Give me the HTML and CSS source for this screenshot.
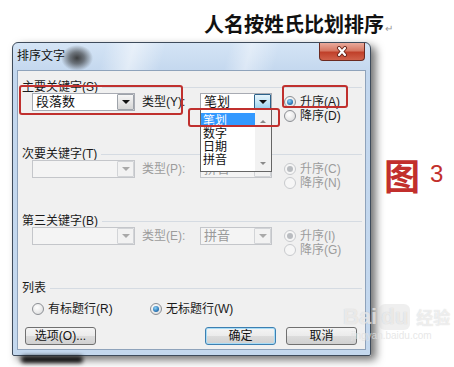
FILE: index.html
```html
<!DOCTYPE html>
<html lang="zh-CN">
<head>
<meta charset="utf-8">
<title>排序文字</title>
<link rel="stylesheet" href="styles.css">
</head>
<body>
<div class="page">
  <header class="top">
    <h1 class="headline">人名按姓氏比划排序<span class="pmark">↵</span></h1>
  </header>
  <div class="main">
    <div class="dialog">
      <div class="titlebar">
        <span class="title">排序文字</span>
        <span class="close">
          <svg width="16" height="11" viewBox="0 0 16 11"><path d="M5 2 L11 9 M11 2 L5 9" stroke="#6a2418" stroke-width="4" stroke-linecap="round"/><path d="M5 2 L11 9 M11 2 L5 9" stroke="#fff" stroke-width="2.2" stroke-linecap="round"/></svg>
        </span>
      </div>
      <div class="panel">
        <section class="sec">
          <div class="sec-head"><span>主要关键字(S)</span></div>
          <div class="sec-row">
            <div class="combo wide"><span class="combo-text">段落数</span><span class="combo-btn"><i class="tri"></i></span></div>
            <span class="type-label">类型(Y):</span>
            <div class="combo narrow"><span class="combo-text">笔划</span><span class="combo-btn pressed"><i class="tri"></i></span></div>
            <div class="radios">
              <div class="radio checked"><i class="dot"></i>升序(A)</div>
              <div class="radio"><i class="dot"></i>降序(D)</div>
            </div>
          </div>
        </section>
        <section class="sec">
          <div class="sec-head"><span>次要关键字(T)</span></div>
          <div class="sec-row">
            <div class="combo wide dis"><span class="combo-text"></span><span class="combo-btn"><i class="tri"></i></span></div>
            <span class="type-label dis-text">类型(P):</span>
            <div class="combo narrow dis"><span class="combo-text">拼音</span><span class="combo-btn"><i class="tri"></i></span></div>
            <div class="radios dis-text">
              <div class="radio checked dis"><i class="dot"></i>升序(C)</div>
              <div class="radio dis"><i class="dot"></i>降序(N)</div>
            </div>
          </div>
        </section>
        <section class="sec">
          <div class="sec-head"><span>第三关键字(B)</span></div>
          <div class="sec-row">
            <div class="combo wide dis"><span class="combo-text"></span><span class="combo-btn"><i class="tri"></i></span></div>
            <span class="type-label dis-text">类型(E):</span>
            <div class="combo narrow dis"><span class="combo-text">拼音</span><span class="combo-btn"><i class="tri"></i></span></div>
            <div class="radios dis-text">
              <div class="radio checked dis"><i class="dot"></i>升序(I)</div>
              <div class="radio dis"><i class="dot"></i>降序(G)</div>
            </div>
          </div>
        </section>
        <section class="list-sec">
          <div class="sec-head list-head"><span>列表</span></div>
          <div class="list-row">
            <div class="radio first"><i class="dot"></i>有标题行(R)</div>
            <div class="radio checked"><i class="dot"></i>无标题行(W)</div>
          </div>
        </section>
        <div class="buttons">
          <span class="btn">选项(O)...</span>
          <span class="btn default">确定</span>
          <span class="btn">取消</span>
        </div>
      </div>
    </div>
    <div class="fig"><span class="fig-char">图</span><span class="fig-num">3</span></div>
  </div>

  <div class="dropdown">
    <div class="dd-items">
      <div class="dd-item sel">笔划</div>
      <div class="dd-item">数字</div>
      <div class="dd-item">日期</div>
      <div class="dd-item">拼音</div>
    </div>
    <div class="dd-scroll"><i class="up"></i><i class="down"></i></div>
  </div>

  <div class="mark mark-a"></div>
  <div class="mark mark-b"></div>
  <div class="mark mark-c"></div>

  <div class="watermark">
    <div class="wm-logo">Bai<span class="wm-du">du</span> <span class="wm-cn">经验</span></div>
    <div class="wm-url">jingyan.baidu.com</div>
  </div>
</div>
</body>
</html>
```

FILE: styles.css
```css
* { box-sizing: border-box; margin: 0; padding: 0; }
body {
  background: #fff;
  font-family: "Noto Sans CJK SC", "Noto Sans", sans-serif;
  color: #1a1a1a;
}
.page {
  position: relative;
  width: 454px;
  height: 367px;
  overflow: hidden;
  background: #fff;
}
.top {
  height: 42px;
  padding: 12px 0 0 204px;
}
.headline {
  font-size: 20px;
  font-weight: 700;
  line-height: 24px;
  color: #111;
  white-space: nowrap;
}
.pmark {
  font-size: 10px;
  font-weight: 400;
  color: #9a9a9a;
  margin-left: 1px;
}
.main {
  display: flex;
  align-items: flex-start;
  padding-left: 12px;
}
.dialog {
  position: relative;
  width: 359px;
  height: 314px;
  border: 1px solid #3e4b5b;
  border-radius: 6px 6px 2px 2px;
  padding: 0 4px 5px;
  background: linear-gradient(180deg, #d4e4f5 0, #c3d7ee 30px, #c4d8ee 100%);
  box-shadow: 5px 4px 9px rgba(0, 0, 0, 0.55);
  font-family: "Liberation Sans", "Noto Sans CJK SC", sans-serif;
}
.dialog::after {
  content: "";
  position: absolute;
  left: 8px;
  bottom: -8px;
  width: 62px;
  height: 7px;
  background: #111;
  border-radius: 4px;
  filter: blur(2px);
}
.titlebar {
  position: relative;
  height: 27px;
  display: flex;
  justify-content: space-between;
  align-items: flex-start;
  background:
    radial-gradient(ellipse 16px 13px at 60px 15px, rgba(45, 45, 45, 0.9) 0, rgba(45, 45, 45, 0.6) 45%, rgba(45, 45, 45, 0) 100%),
    linear-gradient(105deg, rgba(255,255,255,0) 25%, rgba(255,255,255,0.5) 33%, rgba(255,255,255,0) 42%, rgba(255,255,255,0) 60%, rgba(255,255,255,0.4) 66%, rgba(255,255,255,0) 74%);
}
.title {
  font-size: 12px;
  line-height: 14px;
  padding-top: 6px;
  color: #111;
}
.close {
  width: 46px;
  height: 18px;
  margin-right: 1px;
  border: 1px solid #6b2a20;
  border-top: none;
  border-radius: 0 0 4px 4px;
  background: linear-gradient(180deg, #e9aa9c 0, #d67863 45%, #c0402a 55%, #d0614a 100%);
  display: flex;
  align-items: center;
  justify-content: center;
}
.panel {
  height: 280px;
  border: 1px solid #8fa3bb;
  background: #f0f0f0;
  padding: 10px 0 0 4px;
  font-size: 12px;
}
.sec { height: 67px; }
.sec-head {
  display: flex;
  align-items: center;
  height: 12px;
  line-height: 12px;
  white-space: nowrap;
}
.sec-head::after {
  content: "";
  flex: 1;
  margin: 1px 3px 0 4px;
  border-top: 1px solid #d5dbe2;
}
.sec-row {
  display: flex;
  align-items: flex-start;
  padding-left: 10px;
}
.combo {
  height: 18px;
  border: 1px solid #a8abb3;
  background: #fff;
  display: flex;
}
.wide { width: 103px; }
.narrow { width: 72px; }
.combo-text {
  flex: 1;
  padding-left: 3px;
  font-size: 13px;
  line-height: 16px;
  color: #111;
}
.combo-btn {
  width: 17px;
  border: 1px solid #9ea3aa;
  border-radius: 1px;
  background: linear-gradient(180deg, #f6f6f6 0, #e6e6e6 50%, #d6d6d6 100%);
  display: flex;
  align-items: center;
  justify-content: center;
}
.combo-btn.pressed {
  border-color: #2c628b;
  background: linear-gradient(180deg, #e5f4fc 0, #c4e5f6 50%, #98d1ef 100%);
}
.tri {
  width: 0;
  height: 0;
  border-left: 4px solid transparent;
  border-right: 4px solid transparent;
  border-top: 4px solid #111;
}
.combo.dis { border-color: #c4c6ca; background: #f4f4f4; }
.combo.dis .combo-text { color: #9a9a9a; }
.combo.dis .combo-btn { border-color: #d2d4d7; background: #f2f2f2; }
.combo.dis .tri { border-top-color: #a9a9a9; }
.type-label {
  width: 58px;
  margin-left: 7px;
  line-height: 18px;
  white-space: nowrap;
}
.dis-text { color: #9c9c9c; }
.radios {
  margin-left: 12px;
  margin-top: 2px;
}
.radio {
  display: flex;
  align-items: center;
  gap: 4px;
  height: 14px;
  line-height: 14px;
  white-space: nowrap;
}
.dot {
  position: relative;
  width: 12px;
  height: 12px;
  border-radius: 50%;
  border: 1px solid #8c8f94;
  background: radial-gradient(circle at 40% 35%, #ffffff 0, #e8e8e8 60%, #cfd3d8 100%);
  flex: none;
}
.radio.checked .dot::after {
  content: "";
  position: absolute;
  left: 2px;
  top: 2px;
  width: 6px;
  height: 6px;
  border-radius: 50%;
  background: radial-gradient(circle at 40% 35%, #8fd3f8 0, #2d79b8 60%, #1c4f86 100%);
}
.radio.dis .dot { border-color: #c8cacd; background: #f6f6f6; }
.radio.checked.dis .dot::after { background: #b9bcc0; }
.list-sec { height: 45px; }
.list-row {
  display: flex;
  padding-left: 10px;
  margin-top: 8px;
}
.radio.first { width: 118px; }
.buttons {
  display: flex;
  gap: 10px;
  margin: 0 8px 0 3px;
}
.btn {
  width: 71px;
  height: 18px;
  border: 1px solid #707070;
  border-radius: 3px;
  background: linear-gradient(180deg, #f4f4f4 0, #ebebeb 50%, #dcdcdc 51%, #d0d0d0 100%);
  font-size: 12px;
  line-height: 16px;
  text-align: center;
  white-space: nowrap;
  color: #111;
}
.btn.default {
  margin-left: auto;
  border-color: #3c7fb1;
  box-shadow: inset 0 0 0 1px #a8dcf6;
}
.fig {
  display: flex;
  align-items: center;
  margin: 113px 0 0 13px;
  color: #c22f2c;
}
.fig-char {
  font-size: 36px;
  font-weight: 700;
  line-height: 38px;
}
.fig-num {
  font-family: "Liberation Sans", sans-serif;
  font-size: 24px;
  line-height: 28px;
  margin-left: 10px;
}
.dropdown {
  position: absolute;
  left: 200px;
  top: 109px;
  width: 72px;
  height: 63px;
  border: 1px solid #666;
  background: #fff;
  display: flex;
}
.dd-items {
  flex: 1;
  padding-top: 3px;
}
.dd-item {
  height: 13px;
  line-height: 13px;
  font-size: 12px;
  padding-left: 2px;
  color: #111;
}
.dd-item.sel { background: #3399ff; color: #fff; }
.dd-scroll {
  position: relative;
  width: 16px;
  background: #f2f2f2;
}
.dd-scroll .up, .dd-scroll .down {
  position: absolute;
  left: 5px;
  width: 0;
  height: 0;
  border-left: 3px solid transparent;
  border-right: 3px solid transparent;
}
.dd-scroll .up { top: 10px; border-bottom: 3px solid #8a8a8a; }
.dd-scroll .down { bottom: 6px; border-top: 3px solid #8a8a8a; }
.mark {
  position: absolute;
  border: 2px solid #c0302e;
  border-radius: 3px;
}
.mark-a { left: 19px; top: 85px; width: 164px; height: 30px; }
.mark-b { left: 282px; top: 85px; width: 66px; height: 23px; }
.mark-c { left: 188px; top: 108px; width: 92px; height: 19px; }
.watermark {
  position: absolute;
  left: 343px;
  top: 304px;
  color: rgba(255, 255, 255, 0.6);
  text-shadow: 0 0 1px rgba(140, 140, 140, 0.4);
  font-family: "Liberation Sans", sans-serif;
}
.wm-logo {
  font-size: 22px;
  font-weight: 700;
  line-height: 26px;
  white-space: nowrap;
}
.wm-du {
  display: inline-block;
  background: rgba(210, 210, 210, 0.35);
  border-radius: 6px;
  padding: 0 2px;
  margin-left: 2px;
}
.wm-cn {
  font-family: "Noto Sans CJK SC", sans-serif;
  font-size: 17px;
}
.wm-url {
  font-size: 10px;
  line-height: 12px;
  margin-left: 8px;
  color: rgba(225, 225, 225, 0.8);
  text-shadow: none;
}
```
